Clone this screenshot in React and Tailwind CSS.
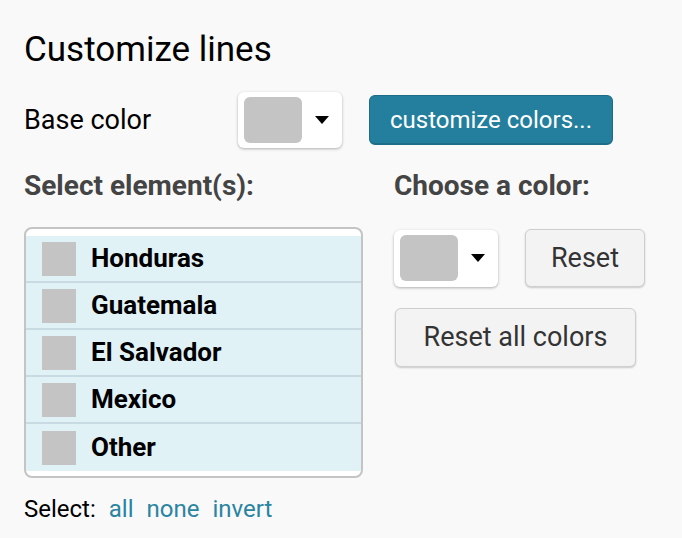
const items = ['Honduras', 'Guatemala', 'El Salvador', 'Mexico', 'Other']

function ColorDrop({ h = 'h-[56px]' }) {
  return (
    <div className={'flex w-[104px] items-center rounded-md bg-white pl-[6px] shadow-[0_1px_3px_rgba(0,0,0,0.3)] ' + h}>
      <div className="h-[46px] w-[58px] rounded-md bg-[#c4c4c4]" />
      <svg width="14" height="8" viewBox="0 0 14 8" className="ml-[13px]">
        <path d="M0 0 L14 0 L7 8 Z" fill="#000" />
      </svg>
    </div>
  )
}

export default function App() {
  return (
    <div className="min-h-[538px] w-[682px] bg-[#f9f9f9] pl-6 pt-[29px] text-black" style={{ fontFamily: 'Roboto, sans-serif' }}>
      <h1 className="text-[35px] leading-[42px]">Customize lines</h1>
      <div className="mt-[21px] flex items-center">
        <span className="w-[214px] text-[27px]">Base color</span>
        <ColorDrop />
        <button className="ml-[27px] h-[50px] w-[244px] rounded-md border border-b-2 border-[#1d6d86] bg-[#237f9d] text-[24px] text-white">
          customize colors...
        </button>
      </div>
      <div className="mt-[21px] flex">
        <div className="w-[339px]">
          <div className="text-[28px] font-bold leading-[34px] text-[#444]">Select element(s):</div>
          <div className="mt-[24px] overflow-hidden rounded-lg border-2 border-[#c4c4c4] bg-white pb-[5px] pt-[7px]">
            {items.map((name, i) => (
              <div key={name} className={'flex h-[47px] items-center bg-[#e1f2f7] pl-[16px] ' + (i < items.length - 1 ? 'border-b-2 border-[#c9dbe2]' : '')}>
                <div className="h-[34px] w-[34px] bg-[#c4c4c4]" />
                <span className="ml-[15px] text-[26px] font-bold">{name}</span>
              </div>
            ))}
          </div>
          <div className="mt-[17px] flex gap-[13px] text-[24px] leading-[28px]">
            <span>Select:</span>
            <a className="text-[#2a84a2]">all</a>
            <a className="text-[#2a84a2]">none</a>
            <a className="text-[#2a84a2]">invert</a>
          </div>
        </div>
        <div className="ml-[31px]">
          <div className="text-[28px] font-bold leading-[34px] text-[#444]">Choose a color:</div>
          <div className="mt-[26px] flex items-center">
            <ColorDrop h="h-[57px]" />
            <button className="ml-[27px] h-[58px] w-[120px] rounded-md border border-[#cfcfcf] bg-[#f3f3f3] text-[27px] text-[#333] shadow-[0_1px_2px_rgba(0,0,0,0.2)]">
              Reset
            </button>
          </div>
          <button className="ml-px mt-[21px] h-[59px] w-[241px] rounded-md border border-[#cfcfcf] bg-[#f3f3f3] text-[27px] text-[#333] shadow-[0_1px_2px_rgba(0,0,0,0.2)]">
            Reset all colors
          </button>
        </div>
      </div>
    </div>
  )
}
